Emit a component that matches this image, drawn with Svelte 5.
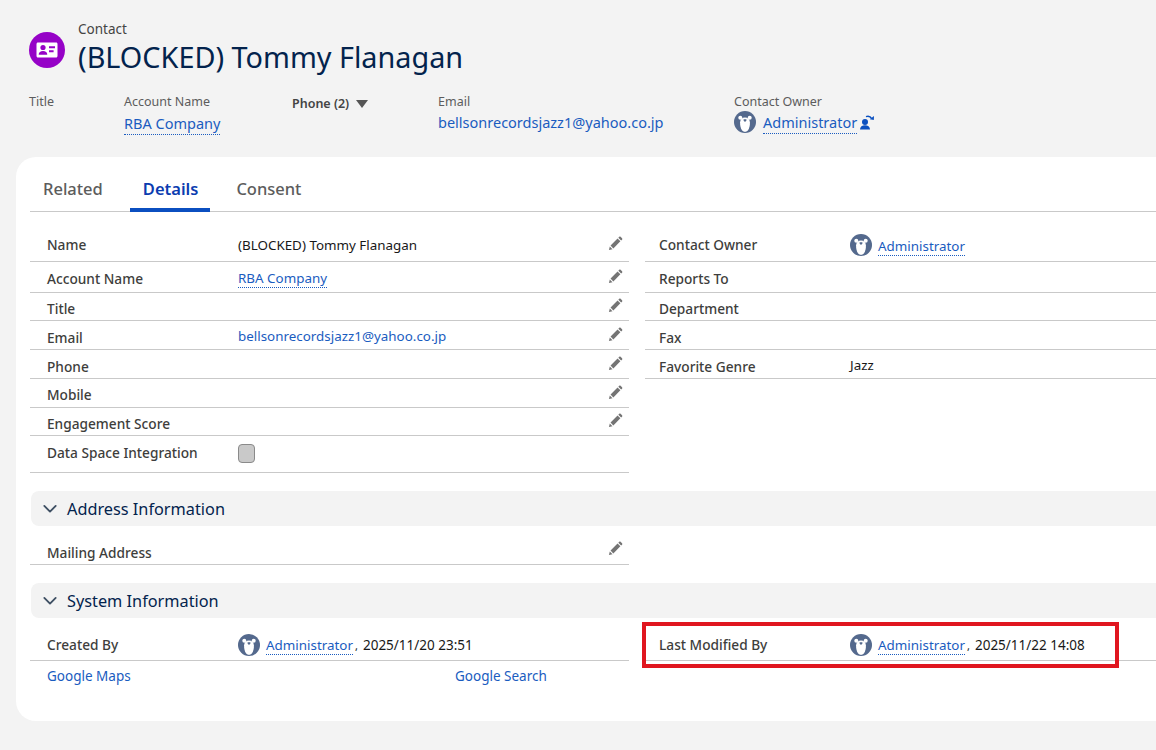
<script>
  const leftRows = [
    { label: 'Name', value: '(BLOCKED) Tommy Flanagan', h: 34, edit: true, lift: 0 },
    { label: 'Account Name', link: 'RBA Company', h: 31, edit: true, dotted: true },
    { label: 'Title', h: 28, edit: true },
    { label: 'Email', link: 'bellsonrecordsjazz1@yahoo.co.jp', h: 29, edit: true, lift: 6 },
    { label: 'Phone', h: 29, edit: true, lift: 6 },
    { label: 'Mobile', h: 29, edit: true },
    { label: 'Engagement Score', h: 28, edit: true },
    { label: 'Data Space Integration', h: 37, check: true, lift: -2 }
  ];
  const rightRows = [
    { label: 'Contact Owner', owner: true, h: 34, lift: 0 },
    { label: 'Reports To', h: 31 },
    { label: 'Department', h: 28 },
    { label: 'Fax', h: 29, lift: 6 },
    { label: 'Favorite Genre', value: 'Jazz', h: 29, lift: 6 }
  ];
  const highlights = [
    { label: 'Title', width: 95 },
    { label: 'Account Name', link: 'RBA Company', width: 168, dotted: true },
    { label: 'Phone (2)', width: 146, menu: true },
    { label: 'Email', link: 'bellsonrecordsjazz1@yahoo.co.jp', width: 296 }
  ];
</script>

{#snippet bear()}
  <svg class="bear" viewBox="0 0 22 22" aria-hidden="true">
    <circle cx="11" cy="11" r="11" fill="#54698d" />
    <circle cx="6.300" cy="6.800" r="2" fill="#fff" />
    <circle cx="15.700" cy="6.800" r="2" fill="#fff" />
    <path d="M11 6.500c2.900 0 4.700 1.900 4.900 4.700.2 3.100-.6 6-1.700 7.700-.8 1.200-1.900 1.800-3.200 1.800s-2.400-.6-3.200-1.800c-1.100-1.700-1.900-4.600-1.700-7.700.2-2.800 2-4.700 4.900-4.700z" fill="#fff" />
    <path d="M9.500 8.600c.8-.4 2.200-.4 3 0 .3.800-.6 2.100-1.500 2.100s-1.800-1.300-1.500-2.100z" fill="#54698d" />
  </svg>
{/snippet}

{#snippet pencil()}
  <svg class="pencil" viewBox="0 0 16 16" aria-hidden="true">
    <path d="M1 15l.9-3.900 2.900 3zM2.700 10.200l7.500-7.500 3 3-7.500 7.500zM11 1.900l1-1c.4-.4 1-.4 1.400 0l1.600 1.600c.4.400.4 1 0 1.400l-1 1z" fill="#747474" />
  </svg>
{/snippet}

{#snippet chevron()}
  <svg class="chevron" viewBox="0 0 16 10" aria-hidden="true">
    <path d="M1.500 1.500L8 8l6.500-6.500" fill="none" stroke="#3e4f63" stroke-width="2.100" stroke-linecap="round" stroke-linejoin="round" />
  </svg>
{/snippet}

{#snippet detailRow(row)}
  <div class="row" style={`height:${row.h}px`}>
    <span class="label" style={`margin-top:${row.lift ?? 4}px`}>{row.label}</span>
    <span class="value">
      {#if row.link}<a class="link" class:plain={!row.dotted}>{row.link}</a>{/if}
      {#if row.value}<span class="text" class:low={row.value === 'Jazz'}>{row.value}</span>{/if}
      {#if row.owner}{@render bear()}<a class="link owner-link">Administrator</a>{/if}
      {#if row.check}<span class="check"></span>{/if}
    </span>
    {#if row.edit}{@render pencil()}{/if}
  </div>
{/snippet}

<main class="page">
  <header class="head">
    <div class="title-row">
      <div class="contact-icon">
        <svg viewBox="0 0 36 36" aria-hidden="true">
          <path d="M9 10.500h18c1 0 1.500.6 1.500 1.500v12c0 .9-.6 1.500-1.500 1.500H9c-.9 0-1.500-.6-1.500-1.500V12c0-.9.6-1.500 1.500-1.500z" fill="#fff" />
          <circle cx="14" cy="15.500" r="2.600" fill="#9602c7" />
          <path d="M9.700 22.800c0-2.500 1.800-3.700 4.300-3.700s4.300 1.200 4.300 3.700z" fill="#9602c7" />
          <path d="M20 14.300h6v1.900h-6zM20 18.300h4.600v1.900H20z" fill="#9602c7" />
        </svg>
      </div>
      <div class="title-copy">
        <div class="eyebrow">Contact</div>
        <h1>(BLOCKED) Tommy Flanagan</h1>
      </div>
    </div>

    <div class="highlights">
      {#each highlights as item}
        <div class="highlight" style={`width:${item.width}px`}>
          {#if item.menu}
            <div class="phone">{item.label}<span class="caret"></span></div>
          {:else}
            <div class="hl-label">{item.label}</div>
            {#if item.link}<a class="link hl-link" class:plain={!item.dotted}>{item.link}</a>{/if}
          {/if}
        </div>
      {/each}
      <div class="highlight">
        <div class="hl-label">Contact Owner</div>
        <div class="hl-owner">
          {@render bear()}
          <a class="link hl-link">Administrator</a>
          <svg class="change-owner" viewBox="0 0 16 16" aria-hidden="true">
            <circle cx="6" cy="8" r="3" fill="#0b50c0" />
            <path d="M1 15.500c0-2.900 2.200-4.300 5-4.300s5 1.400 5 4.300z" fill="#0b50c0" />
            <path d="M7 2.600c2.400-.8 4.600.1 5.700 2.100" fill="none" stroke="#0b50c0" stroke-width="1.500" />
            <path d="M10.800 5.200l4 .9.200-4z" fill="#0b50c0" />
          </svg>
        </div>
      </div>
    </div>
  </header>

  <section class="card">
    <nav class="tabs">
      <span class="tab">Related</span>
      <span class="tab active">Details</span>
      <span class="tab">Consent</span>
    </nav>

    <div class="columns first">
      <div class="col">
        {#each leftRows as row}{@render detailRow(row)}{/each}
      </div>
      <div class="col right">
        {#each rightRows as row}{@render detailRow(row)}{/each}
      </div>
    </div>

    <div class="section-head">{@render chevron()}<span>Address Information</span></div>
    <div class="columns">
      <div class="col">
        <div class="row mailing">
          <span class="label">Mailing Address</span>
          <span class="value"></span>
          {@render pencil()}
        </div>
      </div>
      <div class="col"></div>
    </div>

    <div class="section-head">{@render chevron()}<span>System Information</span></div>
    <div class="columns">
      <div class="col">
        <div class="row audit">
          <span class="label">Created By</span>
          <span class="value">{@render bear()}<a class="link owner-link">Administrator</a><span class="stamp"><i>,</i>2025/11/20 23:51</span></span>
        </div>
      </div>
      <div class="col right">
        <div class="row audit">
          <span class="label">Last Modified By</span>
          <span class="value">{@render bear()}<a class="link owner-link">Administrator</a><span class="stamp"><i>,</i>2025/11/22 14:08</span></span>
          <div class="callout"></div>
        </div>
      </div>
    </div>

    <div class="custom-links">
      <a class="custom">Google Maps</a>
      <a class="custom">Google Search</a>
    </div>
  </section>
</main>

<style>
  :global(body) {
    margin: 0;
    background: #f3f3f3;
    overflow: hidden;
  }

  .page {
    width: 1156px;
    height: 750px;
    overflow: hidden;
    font-family: "Noto Sans", "Open Sans", sans-serif;
    color: #181818;
    background: #f3f3f3;
  }

  a {
    text-decoration: none;
  }

  .head {
    height: 157px;
    padding: 20px 0 0 29px;
    box-sizing: border-box;
  }

  .title-row {
    display: flex;
    align-items: center;
    gap: 13px;
  }

  .contact-icon {
    width: 36px;
    height: 36px;
    margin-top: 4px;
    border-radius: 50%;
    background: #9602c7;
    flex-shrink: 0;
  }

  .contact-icon svg {
    display: block;
    width: 36px;
    height: 36px;
  }

  .eyebrow {
    font-size: 13.500px;
    line-height: 18px;
    color: #444;
  }

  h1 {
    margin: 0;
    font-size: 28.800px;
    line-height: 38px;
    font-weight: 400;
    color: #03234d;
  }

  .highlights {
    display: flex;
    margin-top: 17px;
  }

  .hl-label {
    font-size: 12.500px;
    line-height: 18px;
    color: #5c5c5c;
  }

  .hl-link {
    font-size: 14.500px;
    line-height: 22px;
  }

  .highlight:nth-child(2) .hl-link {
    display: inline-block;
    margin-top: 1px;
  }

  .phone {
    padding-top: 2px;
    font-size: 12.500px;
    line-height: 18px;
    font-weight: 600;
    color: #444;
  }

  .caret {
    display: inline-block;
    margin-left: 7px;
    border-left: 6px solid transparent;
    border-right: 6px solid transparent;
    border-top: 8px solid #555;
  }

  .hl-owner {
    display: flex;
    align-items: center;
    height: 22px;
  }

  .hl-owner .bear {
    margin-right: 7px;
  }

  .change-owner {
    width: 16px;
    height: 16px;
    margin-left: 2px;
  }

  .link {
    color: #1a5cc0;
    border-bottom: 1px dotted #1a5cc0;
    white-space: nowrap;
  }

  .link.plain {
    border-bottom-color: transparent;
  }

  .bear {
    display: block;
    width: 22px;
    height: 22px;
    flex-shrink: 0;
  }

  .card {
    height: 564px;
    margin: 0 -30px 0 16px;
    padding-left: 14px;
    background: #fff;
    border-radius: 20px;
    box-sizing: border-box;
  }

  .tabs {
    display: flex;
    height: 55px;
    border-bottom: 1px solid #c9c9c9;
    box-sizing: border-box;
  }

  .tab {
    display: flex;
    align-items: flex-end;
    padding: 0 13px 10px;
    margin-right: 14px;
    font-size: 16.500px;
    line-height: 24px;
    font-weight: 500;
    color: #5c5c5c;
  }

  .tab.active {
    margin-right: 13px;
    color: #0b3cb0;
    font-weight: 600;
    border-bottom: 4px solid #0b4fc0;
    margin-bottom: -1px;
    padding: 0 12px 7px 13px;
  }

  .columns {
    display: grid;
    grid-template-columns: 599px 1fr;
    column-gap: 16px;
  }

  .columns.first {
    padding-top: 16px;
  }

  .row {
    position: relative;
    display: flex;
    align-items: center;
    padding: 0 0 0 17px;
    box-sizing: border-box;
    border-bottom: 1px solid #c9c9c9;
  }

  .right .row {
    padding-left: 14px;
  }

  .label {
    width: 191px;
    flex-shrink: 0;
    font-size: 13.700px;
    line-height: 18px;
    font-weight: 500;
    color: #3e3e3c;
    white-space: nowrap;
  }

  .value {
    display: flex;
    flex: 1;
    align-items: center;
    font-size: 13.400px;
    color: #181818;
  }

  .value .link {
    font-size: 13.400px;
    margin-top: 3px;
  }

  .value .owner-link {
    margin: 3px 0 0 6px;
  }

  .audit .value .owner-link {
    margin-top: 1px;
  }

  .text.low {
    margin-top: 2px;
  }

  .stamp {
    font-size: 13.500px;
  }

  .stamp i {
    font-style: normal;
    font-size: 11px;
    margin: 0 5px 0 2px;
  }

  .check {
    width: 15px;
    height: 17px;
    margin-top: -1px;
    border: 1px solid #8a8a8a;
    border-radius: 4px;
    background: #c9c9c9;
  }

  .pencil {
    width: 15px;
    height: 15px;
    margin: 0 6px 2px 0;
    flex-shrink: 0;
  }

  .mailing {
    height: 39px;
  }

  .mailing .label {
    margin-top: 16px;
  }

  .mailing .pencil {
    margin: 6px 6px 0 0;
  }

  .section-head {
    display: flex;
    align-items: center;
    height: 35px;
    margin-top: 18px;
    padding-left: 12px;
    margin-left: 1px;
    background: #f3f3f3;
    border-radius: 8px;
    font-size: 16.300px;
    color: #03234d;
  }

  .chevron {
    width: 14px;
    height: 10px;
    margin-right: 10px;
  }

  .audit {
    height: 43px;
  }

  .audit .label {
    margin-top: 12px;
  }

  .audit .value {
    padding-top: 12px;
  }

  .callout {
    position: absolute;
    left: -3px;
    top: 4px;
    width: 477px;
    height: 46px;
    border: 4px solid #e0161f;
    box-sizing: border-box;
    pointer-events: none;
  }

  .custom-links {
    display: grid;
    grid-template-columns: 408px 1fr;
    padding: 5px 0 0 17px;
  }

  .custom {
    font-size: 13.500px;
    line-height: 20px;
    color: #1a5cc0;
  }
</style>
